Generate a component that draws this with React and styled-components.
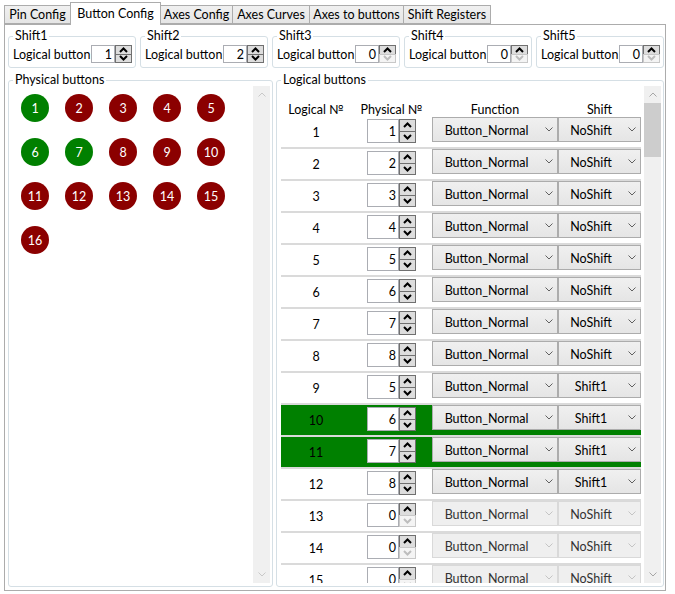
import React from 'react';
import styled, { createGlobalStyle } from 'styled-components';

const GlobalStyle = createGlobalStyle`
  body {
    margin: 0;
    background: #ffffff;
    font-family: Lato, "Noto Sans", "Segoe UI", sans-serif;
    font-size: 12.5px;
    color: #000000;
  }
`;

const tabs = [
  { label: 'Pin Config', w: 67 },
  { label: 'Button Config', w: 91, active: true },
  { label: 'Axes Config', w: 73 },
  { label: 'Axes Curves', w: 78 },
  { label: 'Axes to buttons', w: 95 },
  { label: 'Shift Registers', w: 88 },
];

const shifts = [1, 2, 0, 0, 0];
const greenLeds = [1, 6, 7];

const rows = [
  { n: 1, p: 1, shift: 'NoShift' },
  { n: 2, p: 2, shift: 'NoShift' },
  { n: 3, p: 3, shift: 'NoShift' },
  { n: 4, p: 4, shift: 'NoShift' },
  { n: 5, p: 5, shift: 'NoShift' },
  { n: 6, p: 6, shift: 'NoShift' },
  { n: 7, p: 7, shift: 'NoShift' },
  { n: 8, p: 8, shift: 'NoShift' },
  { n: 9, p: 5, shift: 'Shift1' },
  { n: 10, p: 6, shift: 'Shift1', active: true },
  { n: 11, p: 7, shift: 'Shift1', active: true },
  { n: 12, p: 8, shift: 'Shift1' },
  { n: 13, p: 0, shift: 'NoShift', off: true },
  { n: 14, p: 0, shift: 'NoShift', off: true },
  { n: 15, p: 0, shift: 'NoShift', off: true },
];

function Chevron({ up, color, bold }) {
  return (
    <svg width={bold ? 9 : 8} height={bold ? 6 : 5} viewBox={bold ? '0 0 9 6' : '0 0 8 5'}>
      {bold ? (
        <path d={up ? 'M1 5 L4.5 1.5 L8 5' : 'M1 1 L4.5 4.5 L8 1'} fill="none" stroke={color} strokeWidth="2" />
      ) : (
        <path d={up ? 'M0.5 4.5 L4 1 L7.5 4.5' : 'M0.5 0.5 L4 4 L7.5 0.5'} fill="none" stroke={color} strokeWidth="1" />
      )}
    </svg>
  );
}

function Spinner({ value, h, textW, downOff }) {
  return (
    <Spin $h={h}>
      <SpinText $w={textW} $h={h}>{value}</SpinText>
      <SpinButtons>
        <SpinBtn><Chevron up bold color="#000" /></SpinBtn>
        <SpinBtn $off={downOff}><Chevron bold color={downOff ? '#bdbdbd' : '#000'} /></SpinBtn>
      </SpinButtons>
    </Spin>
  );
}

function Combo({ text, off }) {
  return (
    <ComboBox $off={off}>
      <ComboText>{text}</ComboText>
      <ComboArrow><Chevron color={off ? '#c4c4c4' : '#606060'} /></ComboArrow>
    </ComboBox>
  );
}

function ScrollBar({ thumb, color }) {
  return (
    <ScrollTrack>
      <ScrollArrow><Chevron up color={color} /></ScrollArrow>
      {thumb && <ScrollThumb />}
      <ScrollSpace />
      <ScrollArrow><Chevron color={color} /></ScrollArrow>
    </ScrollTrack>
  );
}

export default function App() {
  return (
    <Window>
      <GlobalStyle />
      <TabStrip>
        {tabs.map((t) => (
          <Tab key={t.label} $w={t.w} $active={t.active}>{t.label}</Tab>
        ))}
      </TabStrip>
      <Panel>
        <ShiftRow>
          {shifts.map((v, i) => (
            <ShiftGroup key={i}>
              <Legend>Shift{i + 1}</Legend>
              <ShiftLine>
                <span>Logical button</span>
                <Spinner value={v} h={18} textW={24} downOff={v === 0} />
              </ShiftLine>
            </ShiftGroup>
          ))}
        </ShiftRow>
        <BottomRow>
          <BigGroup>
            <Legend>Physical buttons</Legend>
            <GroupBody>
              <LedArea>
                {Array.from({ length: 16 }, (_, i) => (
                  <Led key={i} $on={greenLeds.includes(i + 1)}>{i + 1}</Led>
                ))}
              </LedArea>
              <ScrollBar color="#c8c8c8" />
            </GroupBody>
          </BigGroup>
          <BigGroup>
            <Legend>Logical buttons</Legend>
            <GroupBody>
              <ListArea>
                <HeaderRow>
                  <span>Logical №</span>
                  <span>Physical №</span>
                  <span>Function</span>
                  <span>Shift</span>
                </HeaderRow>
                {rows.map((r) => (
                  <Row key={r.n} $active={r.active}>
                    <Num>{r.n}</Num>
                    <SpinCell>
                      <Spinner value={r.p} h={24} textW={32} downOff={r.p === 0} />
                    </SpinCell>
                    <Combo text="Button_Normal" off={r.off} />
                    <Combo text={r.shift} off={r.off} />
                  </Row>
                ))}
              </ListArea>
              <ScrollBar thumb color="#a6a6a6" />
            </GroupBody>
          </BigGroup>
        </BottomRow>
      </Panel>
    </Window>
  );
}

const Window = styled.div`
  width: 675px;
  height: 594px;
  box-sizing: border-box;
  padding: 2px 0 0 4px;
`;

const TabStrip = styled.div`
  display: flex;
  align-items: flex-end;
  height: 22px;
  position: relative;
  z-index: 1;
`;

const Tab = styled.div`
  box-sizing: border-box;
  width: ${(p) => p.$w}px;
  height: ${(p) => (p.$active ? 23 : 19)}px;
  margin-right: -1px;
  margin-bottom: ${(p) => (p.$active ? -1 : 0)}px;
  border: 1px solid #acacac;
  border-bottom: ${(p) => (p.$active ? 'none' : '1px solid #acacac')};
  background: ${(p) => (p.$active ? '#ffffff' : 'linear-gradient(#f0f0f0, #e5e5e5)')};
  position: relative;
  z-index: ${(p) => (p.$active ? 2 : 1)};
  display: flex;
  align-items: center;
  justify-content: center;
  padding-bottom: ${(p) => (p.$active ? 2 : 0)}px;
  white-space: nowrap;
`;

const Panel = styled.div`
  box-sizing: border-box;
  width: 662px;
  height: 567px;
  border: 1px solid #acacac;
  background: #ffffff;
  padding: 3px 1px 3px 3px;
  display: flex;
  flex-direction: column;
  gap: 4px;
`;

const ShiftRow = styled.div`
  display: grid;
  grid-template-columns: repeat(5, 1fr);
  gap: 4px;
`;

const Group = styled.fieldset`
  margin: 0;
  min-width: 0;
  border: 1px solid #d5dfe5;
  border-radius: 3px;
`;

const ShiftGroup = styled(Group)`
  padding: 0 3px 4px 4px;
`;

const BigGroup = styled(Group)`
  padding: 0 2px 3px 4px;
  display: flex;
  flex-direction: column;
  min-height: 0;
`;

const Legend = styled.legend`
  padding: 0 2px;
  line-height: 16px;
`;

const ShiftLine = styled.div`
  display: flex;
  align-items: center;
  justify-content: space-between;
  margin-top: 1px;
  white-space: nowrap;
`;

const Spin = styled.div`
  display: flex;
  height: ${(p) => p.$h}px;
`;

const SpinText = styled.div`
  box-sizing: border-box;
  width: ${(p) => p.$w}px;
  height: ${(p) => p.$h}px;
  border: 1px solid #abadb3;
  background: #ffffff;
  text-align: right;
  padding-right: 2px;
  line-height: ${(p) => p.$h}px;
`;

const SpinButtons = styled.div`
  display: flex;
  flex-direction: column;
  width: 17px;
`;

const SpinBtn = styled.div`
  flex: 1;
  box-sizing: border-box;
  border: 1px solid ${(p) => (p.$off ? '#c8c8c8' : '#707070')};
  background: ${(p) => (p.$off ? '#f4f4f4' : '#dddddd')};
  display: flex;
  align-items: center;
  justify-content: center;
  & + & {
    margin-top: -1px;
  }
`;

const BottomRow = styled.div`
  flex: 1;
  min-height: 0;
  display: grid;
  grid-template-columns: 265px 1fr;
  gap: 3px;
`;

const GroupBody = styled.div`
  flex: 1;
  min-height: 0;
  display: flex;
  margin-top: -2px;
`;

const LedArea = styled.div`
  flex: 1;
  display: flex;
  flex-wrap: wrap;
  align-content: flex-start;
`;

const Led = styled.div`
  width: 28px;
  height: 28px;
  margin: 8px;
  border-radius: 50%;
  background: ${(p) => (p.$on ? '#008000' : '#8b0000')};
  color: #ffffff;
  display: flex;
  align-items: center;
  justify-content: center;
`;

const ScrollTrack = styled.div`
  width: 17px;
  flex-shrink: 0;
  background: #f0f0f0;
  display: flex;
  flex-direction: column;
`;

const ScrollArrow = styled.div`
  height: 17px;
  display: flex;
  align-items: center;
  justify-content: center;
`;

const ScrollThumb = styled.div`
  height: 54px;
  background: #cdcdcd;
`;

const ScrollSpace = styled.div`
  flex: 1;
`;

const ListArea = styled.div`
  flex: 1;
  min-width: 0;
  overflow: hidden;
`;

const cols = '70px 81px 126px 83px';

const HeaderRow = styled.div`
  display: grid;
  grid-template-columns: ${cols};
  height: 31px;
  box-sizing: border-box;
  padding-top: 16px;
  line-height: 16px;
  text-align: center;
  white-space: nowrap;
`;

const Row = styled.div`
  display: grid;
  grid-template-columns: ${cols};
  align-items: start;
  width: 360px;
  height: 30px;
  border-bottom: 2px solid #dadada;
  background: ${(p) => (p.$active ? '#008000' : '#ffffff')};
`;

const Num = styled.div`
  text-align: center;
  line-height: 31px;
`;

const SpinCell = styled.div`
  display: flex;
  justify-content: center;
  padding-top: 2px;
`;

const ComboBox = styled.div`
  box-sizing: border-box;
  height: 25px;
  border: 1px solid ${(p) => (p.$off ? '#d9d9d9' : '#acacac')};
  background: ${(p) => (p.$off ? '#efefef' : 'linear-gradient(#f0f0f0, #e5e5e5)')};
  color: ${(p) => (p.$off ? '#333333' : '#000000')};
  display: flex;
  align-items: center;
`;

const ComboText = styled.div`
  flex: 1;
  text-align: center;
  white-space: nowrap;
  line-height: 21px;
  padding-top: 1px;
`;

const ComboArrow = styled.div`
  width: 17px;
  display: flex;
  align-items: center;
  justify-content: center;
`;
